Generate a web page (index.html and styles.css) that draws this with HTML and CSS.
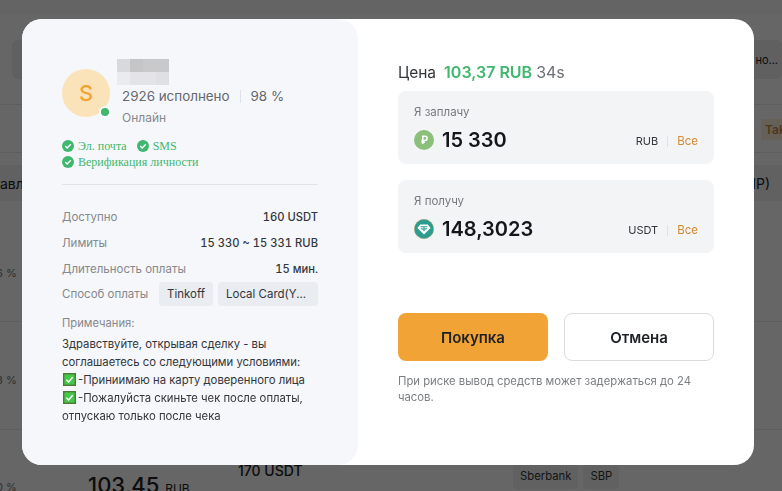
FILE: index.html
```html
<!DOCTYPE html>
<html lang="ru">
<head>
    <meta charset="UTF-8">
    <title>Покупка USDT</title>
    <link rel="stylesheet" href="styles.css">
</head>
<body>
<div class="page">
    <div class="top-strip"></div>
    <div class="filter-row"><span class="bg-text">но...</span></div>
    <div class="tag-row"><span class="tag">Tak</span></div>
    <div class="table-head"><span class="bg-text">авл</span><span class="bg-text">IP)</span></div>
    <div class="bg-row row-a"><span class="bg-pct">6 %</span></div>
    <div class="bg-row row-b"><span class="bg-pct">3 %</span></div>
    <div class="bg-row row-c">
        <span class="bg-pct">0 %</span>
        <span class="bg-price">103,45 <small>RUB</small></span>
        <span class="bg-amount">170 USDT</span>
        <span class="bg-chips"><span class="bg-chip">Sberbank</span><span class="bg-chip">SBP</span></span>
    </div>
</div>

<div class="overlay"></div>

<div class="modal">
    <div class="seller">
        <div class="profile">
            <div class="avatar">S<span class="online-dot"></span></div>
            <div class="profile-info">
                <div class="name-blur">
                    <i class="c1"></i><i class="c2"></i><i class="c3"></i><i class="c3"></i>
                    <i class="c4"></i><i class="c5"></i><i class="c5"></i><i class="c6"></i>
                </div>
                <div class="stats"><span>2926 исполнено</span><span class="stats-sep"></span><span>98 %</span></div>
                <div class="status">Онлайн</div>
            </div>
        </div>

        <div class="verified">
            <span class="check">
                <svg viewBox="0 0 12 12"><circle cx="6" cy="6" r="6" fill="#3fb76e"/><path d="M3.2 6.100l2 2 3.600-3.800" fill="none" stroke="#fff" stroke-width="1.4"/></svg>
                Эл. почта
            </span>
            <span class="check">
                <svg viewBox="0 0 12 12"><circle cx="6" cy="6" r="6" fill="#3fb76e"/><path d="M3.2 6.100l2 2 3.600-3.800" fill="none" stroke="#fff" stroke-width="1.4"/></svg>
                SMS
            </span>
            <span class="check">
                <svg viewBox="0 0 12 12"><circle cx="6" cy="6" r="6" fill="#3fb76e"/><path d="M3.2 6.100l2 2 3.600-3.800" fill="none" stroke="#fff" stroke-width="1.4"/></svg>
                Верификация личности
            </span>
        </div>

        <div class="details">
            <div class="detail"><span class="detail-label">Доступно</span><span class="detail-value">160 USDT</span></div>
            <div class="detail"><span class="detail-label">Лимиты</span><span class="detail-value">15 330 ~ 15 331 RUB</span></div>
            <div class="detail"><span class="detail-label">Длительность оплаты</span><span class="detail-value">15 мин.</span></div>
            <div class="detail pay-methods">
                <span class="detail-label">Способ оплаты</span>
                <span class="chips"><span class="chip">Tinkoff</span><span class="chip chip-wide">Local Card(Y...</span></span>
            </div>
        </div>

        <div class="remark-title">Примечания:</div>
        <div class="remark">
            Здравствуйте, открывая сделку - вы<br>
            соглашаетесь со следующими условиями:<br>
            <svg class="tick" viewBox="0 0 14 14"><rect width="14" height="14" fill="#4c7a35"/><rect x="1.500" y="1.500" width="11" height="11" fill="#46c74a"/><path d="M3.600 7.200l2.400 2.400 4.400-5" fill="none" stroke="#fff" stroke-width="1.600"/></svg>-Приниимаю на карту доверенного лица<br>
            <svg class="tick" viewBox="0 0 14 14"><rect width="14" height="14" fill="#4c7a35"/><rect x="1.500" y="1.500" width="11" height="11" fill="#46c74a"/><path d="M3.600 7.200l2.400 2.400 4.400-5" fill="none" stroke="#fff" stroke-width="1.600"/></svg>-Пожалуйста скиньте чек после оплаты,<br>
            отпускаю только после чека
        </div>
    </div>

    <div class="order">
        <div class="price"><span class="price-label">Цена</span><b class="price-value">103,37 RUB</b><span class="price-timer">34s</span></div>

        <div class="amount-card">
            <div class="amount-label">Я заплачу</div>
            <div class="amount-row">
                <svg class="coin" viewBox="0 0 20 20">
                    <circle cx="10" cy="10" r="10" fill="#8bc07a"/>
                    <path d="M8.800 14V6.200h2.200a2 2 0 0 1 0 4.200H7.400M7.400 12.300h3.600" fill="none" stroke="#fff" stroke-width="1.500"/>
                </svg>
                <span class="amount-value">15 330</span>
                <span class="unit">RUB</span><span class="unit-sep"></span><span class="all">Все</span>
            </div>
        </div>

        <div class="amount-card">
            <div class="amount-label">Я получу</div>
            <div class="amount-row">
                <svg class="coin" viewBox="0 0 20 20">
                    <circle cx="10" cy="10" r="9.700" fill="#2a9d8f" stroke="#b59a5c" stroke-width="0.500"/>
                    <path d="M6.200 5.600h7.600L16.600 9 10 15.400 3.400 9z" fill="#fff"/>
                    <path d="M6.600 7.800h6.800M10 7.800v4.400M6.800 9.600c2 .7 4.400 .7 6.400 0" fill="none" stroke="#2a9d8f" stroke-width="1.100"/>
                </svg>
                <span class="amount-value">148,3023</span>
                <span class="unit">USDT</span><span class="unit-sep"></span><span class="all">Все</span>
            </div>
        </div>

        <div class="actions">
            <button class="btn btn-buy">Покупка</button>
            <button class="btn btn-cancel">Отмена</button>
        </div>
        <p class="risk">При риске вывод средств может задержаться до 24 часов.</p>
    </div>
</div>
</body>
</html>
```

FILE: styles.css
```css
* {
    box-sizing: border-box;
}

html, body {
    margin: 0;
    height: 100%;
    overflow: hidden;
}

body {
    font-family: "Inter", "Liberation Sans", sans-serif;
    background: #fff;
    color: #1e2226;
}

/* page behind the dialog */
.page {
    height: 491px;
    overflow: hidden;
    font-size: 13px;
    color: #222;
}

.top-strip {
    height: 14px;
    background: #fafafa;
}

.filter-row {
    height: 39px;
    margin: 26px 0 0 12px;
    background: #f0f1f3;
    border-radius: 6px;
    display: flex;
    align-items: center;
    justify-content: flex-end;
    padding-right: 4px;
    font-size: 11px;
}

.tag-row {
    height: 49px;
    margin-top: 25px;
    border-top: 1px solid #ececec;
    border-bottom: 1px solid #ececec;
    display: flex;
    align-items: center;
    justify-content: flex-end;
}

.tag {
    margin-top: 2px;
    background: #fdf0dc;
    color: #c8893a;
    font-weight: 600;
    font-size: 12px;
    padding: 3px 0 3px 4px;
    width: 21px;
    overflow: hidden;
}

.table-head {
    height: 36px;
    margin-top: 12px;
    background: #f2f3f5;
    display: flex;
    align-items: center;
    justify-content: space-between;
    padding-right: 12px;
    font-size: 14px;
}

.bg-row {
    position: relative;
    border-bottom: 1px solid #ececec;
}

.row-a {
    height: 121px;
}

.row-b {
    height: 108px;
}

.row-c {
    height: 62px;
    border-bottom: none;
}

.bg-pct {
    color: #777;
    font-size: 11px;
    position: absolute;
    left: -4px;
}

.row-a .bg-pct {
    top: 65px;
}

.row-b .bg-pct {
    top: 51px;
}

.row-c .bg-pct {
    top: 50px;
}

.bg-price {
    position: absolute;
    left: 88px;
    top: 42px;
    font-size: 22px;
    font-weight: 500;
}

.bg-price small {
    font-size: 12px;
    font-weight: 400;
}

.bg-amount {
    position: absolute;
    left: 238px;
    top: 32px;
    font-size: 14px;
    font-weight: 500;
}

.bg-chips {
    position: absolute;
    left: 513px;
    top: 33px;
    display: flex;
    gap: 5px;
}

.bg-chip {
    background: #f2f3f5;
    border-radius: 4px;
    padding: 6px 7px;
    font-size: 11.3px;
    color: #333;
}

.overlay {
    position: fixed;
    inset: 0;
    background: rgba(0, 0, 0, 0.6);
}

/* dialog */
.modal {
    position: fixed;
    left: 22px;
    top: 19px;
    width: 732px;
    height: 446px;
    display: flex;
    background: #fff;
    border-radius: 20px;
}

.seller {
    width: 336px;
    background: #f5f7fb;
    border-radius: 20px;
    padding: 40px;
    font-size: 12px;
}

.profile {
    display: flex;
    height: 77px;
}

.avatar {
    position: relative;
    width: 48px;
    height: 48px;
    margin-top: 10px;
    border-radius: 50%;
    background: #fbe3b9;
    color: #f3a436;
    font-size: 22px;
    font-weight: 500;
    display: flex;
    align-items: center;
    justify-content: center;
    flex-shrink: 0;
}

.online-dot {
    position: absolute;
    right: -1px;
    bottom: -1px;
    width: 12px;
    height: 12px;
    border-radius: 50%;
    background: #3fb76e;
    border: 2px solid #fff;
}

.profile-info {
    margin-left: 7px;
}

.name-blur {
    display: grid;
    grid-template-columns: repeat(4, 13px);
    grid-auto-rows: 13px;
}

.c1 { background: #d9d9dc; }
.c2 { background: #c5c5c8; }
.c3 { background: #c9c9cc; }
.c4 { background: #ebebee; }
.c5 { background: #e4e4e8; }
.c6 { background: #e0e0e4; }

.stats {
    margin: 1px 0 0 5px;
    display: flex;
    align-items: center;
    font-size: 13.4px;
    line-height: 20px;
    color: #65686d;
}

.stats-sep {
    width: 1px;
    height: 13px;
    margin: 0 10px;
    background: #dfe1e5;
}

.status {
    margin: 4px 0 0 5px;
    font-size: 12px;
    line-height: 16px;
    color: #85888c;
}

.verified {
    display: flex;
    flex-wrap: wrap;
    gap: 0 10px;
    margin-top: 2px;
    font-family: "Liberation Serif", serif;
    font-size: 12px;
    line-height: 16px;
    color: #3fb76e;
}

.check {
    display: inline-flex;
    align-items: center;
    gap: 4px;
}

.check svg {
    width: 12px;
    height: 12px;
}

.check:last-child {
    width: 100%;
}

.details {
    margin-top: 14px;
    padding-top: 19px;
    border-top: 1px solid #e1e2e5;
}

.detail {
    display: flex;
    justify-content: space-between;
    align-items: center;
    height: 26px;
    font-weight: 500;
    font-size: 11.2px;
    color: #33363a;
}

.detail-value {
    font-variant-numeric: tabular-nums;
}

.detail-label {
    color: #85888c;
    font-weight: 400;
    font-size: 11.5px;
}

.pay-methods {
    height: 24px;
    margin-top: 0;
}

.chips {
    display: flex;
    gap: 5px;
}

.chip {
    height: 24px;
    padding: 0 8px;
    border-radius: 4px;
    background: #e9ecf0;
    font-size: 11.5px;
    line-height: 24px;
    white-space: nowrap;
    font-weight: 400;
}

.chip-wide {
    width: 100px;
}

.remark-title {
    margin-top: 9px;
    line-height: 16px;
    font-size: 11.2px;
    color: #85888c;
}

.remark {
    margin-top: 4px;
    line-height: 18px;
    font-size: 11.3px;
    color: #33363a;
}

.tick {
    width: 13px;
    height: 13px;
    margin: 0 2px 0 1px;
    vertical-align: -2px;
}

/* order form */
.order {
    flex: 1;
    padding: 44px 40px 0;
}

.price {
    display: flex;
    align-items: baseline;
    height: 18px;
    line-height: 18px;
    font-size: 15.5px;
    color: #33363a;
}

.price-value {
    margin-left: 8px;
    font-size: 16px;
    color: #3fb76e;
    font-weight: 600;
}

.price-timer {
    margin-left: 4px;
    font-size: 16px;
    color: #6b6e72;
}

.amount-card {
    height: 73px;
    margin-top: 16px;
    padding: 13px 16px 0;
    background: #f3f4f6;
    border-radius: 8px;
}

.price + .amount-card {
    margin-top: 10px;
}

.amount-label {
    font-size: 11.5px;
    line-height: 16px;
    color: #76797d;
}

.amount-row {
    display: flex;
    align-items: center;
    margin-top: 8px;
    height: 24px;
}

.coin {
    width: 20px;
    height: 20px;
    margin-right: 8px;
}

.amount-value {
    flex: 1;
    font-size: 20px;
    font-weight: 600;
    color: #14171a;
}

.unit {
    margin-top: 2px;
    font-size: 11px;
    color: #33363a;
}

.unit-sep {
    width: 1px;
    height: 11px;
    margin: 2px 9px 0;
    background: #dfe1e5;
}

.all {
    margin-top: 2px;
    font-size: 11.5px;
    color: #d58a32;
}

.actions {
    display: flex;
    gap: 16px;
    margin-top: 60px;
}

.btn {
    width: 150px;
    height: 48px;
    border-radius: 8px;
    font-family: inherit;
    font-size: 15px;
    font-weight: 600;
    color: #1e2226;
    cursor: pointer;
}

.btn-buy {
    background: #f2a336;
    border: none;
}

.btn-cancel {
    background: #fff;
    border: 1px solid #dadbdd;
}

.risk {
    margin: 12px 0 0;
    font-size: 11.3px;
    line-height: 16px;
    color: #7b7e82;
}
```
